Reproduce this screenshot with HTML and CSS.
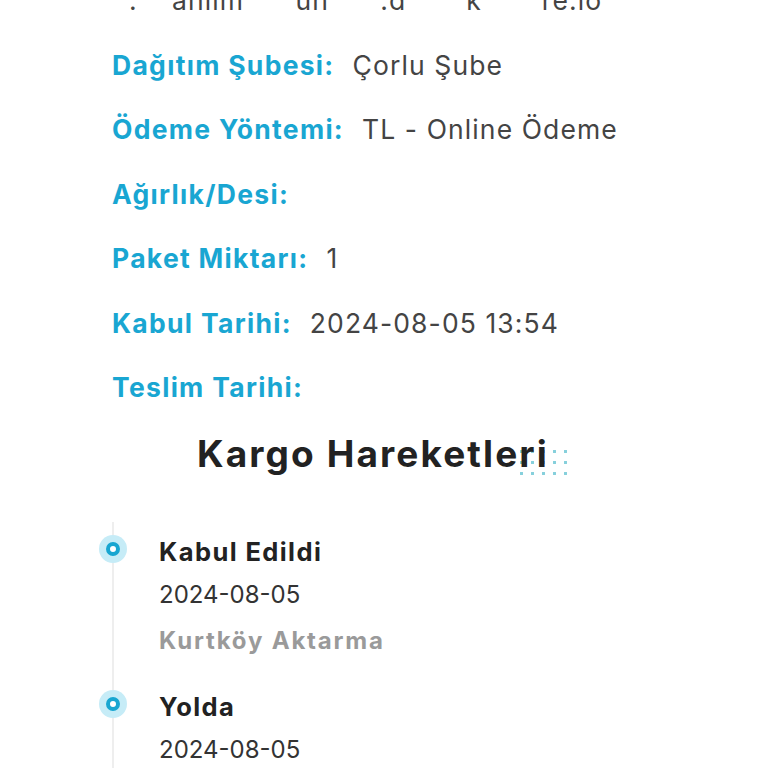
FILE: index.html
```html
<!DOCTYPE html>
<html lang="tr">
<head>
<meta charset="utf-8">
<title>Kargo Takip</title>
<link rel="stylesheet" href="styles.css">
</head>
<body>
<div class="page">
  <section class="info">
    <div class="row cut"><span class="value pre">  .    anlım      un      .d       k       re.io</span></div>
    <div class="row"><span class="label">Dağıtım Şubesi:</span><span class="value">Çorlu Şube</span></div>
    <div class="row"><span class="label">Ödeme Yöntemi:</span><span class="value">TL - Online Ödeme</span></div>
    <div class="row"><span class="label">Ağırlık/Desi:</span><span class="value"></span></div>
    <div class="row"><span class="label">Paket Miktarı:</span><span class="value">1</span></div>
    <div class="row"><span class="label">Kabul Tarihi:</span><span class="value">2024-08-05 13:54</span></div>
    <div class="row"><span class="label">Teslim Tarihi:</span><span class="value"></span></div>
  </section>

  <h2 class="title"><span class="title-text">Kargo Hareketleri</span></h2>

  <ul class="timeline">
    <li class="event">
      <span class="dot"></span>
      <div class="event-title">Kabul Edildi</div>
      <div class="event-date">2024-08-05</div>
      <div class="event-place">Kurtköy Aktarma</div>
    </li>
    <li class="event">
      <span class="dot"></span>
      <div class="event-title">Yolda</div>
      <div class="event-date">2024-08-05</div>
    </li>
  </ul>
</div>
</body>
</html>
```
FILE: styles.css
```css
html, body {
  margin: 0;
  padding: 0;
  background: #ffffff;
}
body {
  font-family: Inter, "Noto Sans", "Liberation Sans", sans-serif;
  overflow: hidden;
  height: 768px;
}
.page {
  width: 768px;
}
.info {
  margin-top: -32px;
  padding-left: 112px;
}
.row {
  height: 64.5px;
  line-height: 64.5px;
  font-size: 26.5px;
  white-space: nowrap;
}
.label {
  color: #19a6d2;
  font-weight: 650;
  letter-spacing: 1.3px;
  margin-right: 18px;
}
.value {
  color: #444444;
  font-weight: 400;
  letter-spacing: 1.1px;
}
.pre {
  white-space: pre;
}
.title {
  margin: 0;
  padding: 4px 22px 0 0;
  height: 98px;
  text-align: center;
  font-size: 37px;
  font-weight: 650;
  letter-spacing: 2.1px;
  color: #222222;
  line-height: 60px;
}
.title-text {
  position: relative;
  display: inline-block;
  z-index: 0;
}
.title-text::after {
  content: "";
  position: absolute;
  right: -22px;
  top: 22px;
  width: 55px;
  height: 33px;
  background-image: radial-gradient(circle, #86d0dc 0, #86d0dc 1.4px, rgba(255,255,255,0) 1.9px);
  background-size: 11px 11px;
  z-index: -1;
}
.timeline {
  list-style: none;
  margin: 0;
  padding: 0 0 0 159px;
  position: relative;
}
.timeline::before {
  content: "";
  position: absolute;
  left: 112px;
  top: 0;
  bottom: -200px;
  width: 2px;
  background: #eeeeee;
}
.event {
  position: relative;
  padding-top: 8px;
  height: 147px;
}
.dot {
  position: absolute;
  left: -60px;
  top: 13px;
  width: 28px;
  height: 28px;
  border-radius: 50%;
  background: #c6ecf7;
  display: flex;
  align-items: center;
  justify-content: center;
}
.dot::after {
  content: "";
  width: 6px;
  height: 6px;
  border-radius: 50%;
  border: 4px solid #18a6d1;
  background: #ffffff;
}
.event-title {
  font-size: 25.5px;
  font-weight: 650;
  letter-spacing: 1.4px;
  color: #222222;
  line-height: 44px;
}
.event-date {
  font-size: 24px;
  color: #333333;
  line-height: 42px;
}
.event-place {
  font-size: 24px;
  font-weight: 650;
  letter-spacing: 1.8px;
  color: #9a9a9a;
  line-height: 50px;
}
```
